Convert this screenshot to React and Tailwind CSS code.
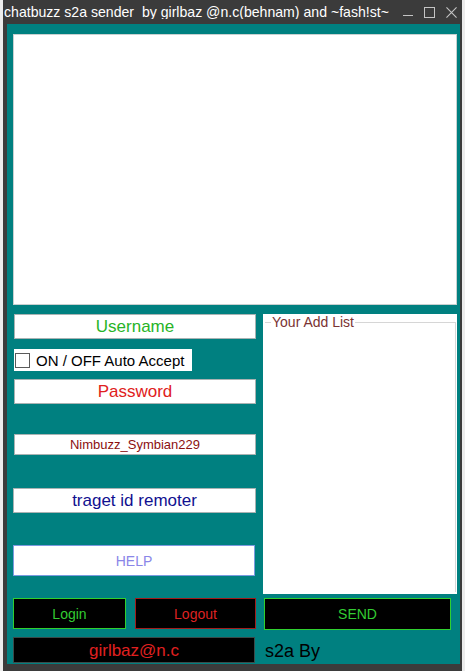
const FONT = { fontFamily: '"Liberation Sans", Arial, sans-serif' };

// plain white edit box with centred coloured text
function Field({ text, className = "" }) {
  return (
    <div className={`flex items-center justify-center bg-white border border-[#a9b3b3] leading-none ${className}`}>
      {text}
    </div>
  );
}

function BlackButton({ text, className = "" }) {
  return (
    <div className={`flex items-center justify-center bg-black border leading-none text-[14px] ${className}`}>
      {text}
    </div>
  );
}

export default function App() {
  return (
    <div className="w-[465px] h-[671px] bg-[#ececec] flex overflow-hidden" style={FONT}>
      <div className="ml-[3px] w-[459px] h-[671px] bg-[#3b3b3b] flex flex-col">
        {/* title bar */}
        <div className="h-[24px] flex items-center pl-[1px] pr-[5px]">
          <span className="min-w-0 overflow-hidden text-white text-[14.1px] whitespace-nowrap leading-none">
            chatbuzz s2a sender&nbsp; by girlbaz @n.c(behnam) and ~fash!st~
          </span>
          <div className="ml-auto shrink-0 flex items-center gap-[11px] text-[#c4c4c4]">
            <svg width="10" height="10" viewBox="0 0 10 10"><path d="M0 8.5h10" stroke="currentColor" strokeWidth="1" /></svg>
            <svg width="11" height="11" viewBox="0 0 11 11"><rect x="0.5" y="0.5" width="10" height="10" fill="none" stroke="currentColor" strokeWidth="1" /></svg>
            <svg width="11" height="11" viewBox="0 0 12 12"><path d="M0.5 0.5l11 11M11.5 0.5l-11 11" stroke="currentColor" strokeWidth="1.2" /></svg>
          </div>
        </div>

        {/* client area */}
        <div className="ml-[4px] mr-[2px] h-[640px] bg-[#008080] pl-[6px] flex flex-col">
          <div className="mt-[10px] w-[444px] h-[271px] bg-white border border-[#c8d0d0]" />

          <div className="mt-[9px] flex gap-[7px] h-[280px]">
            <div className="w-[243px] flex flex-col">
              <Field text="Username" className="ml-[1px] w-[242px] h-[25px] text-[17px] text-[#27b427]" />
              <div className="ml-[1px] mt-[10px] w-[178px] h-[22px] bg-white flex items-center">
                <span className="ml-[1px] w-[15px] h-[15px] border border-[#5a5a5a] bg-white" />
                <span className="ml-[6px] text-[15px] text-black leading-none">ON / OFF Auto Accept</span>
              </div>
              <Field text="Password" className="ml-[1px] mt-[8px] w-[242px] h-[25px] text-[17px] text-[#e02020]" />
              <Field text="Nimbuzz_Symbian229" className="ml-[1px] mt-[30px] w-[242px] h-[21px] text-[13px] text-[#8b1010]" />
              <Field text="traget id remoter" className="mt-[33px] w-[243px] h-[25px] text-[17px] text-[#101090]" />
              <div className="mt-[32px] w-[242px] h-[31px] bg-white border border-[#7a9ae0] flex items-center justify-center text-[14px] text-[#8a86e8] leading-none">
                HELP
              </div>
            </div>

            <div className="w-[194px] h-[280px] bg-white relative">
              <div className="mt-[8px] ml-[2px] mr-[1px] h-[270px] border-t border-r border-[#d6d6d6]" />
              <span className="absolute left-[8px] top-[1px] bg-white px-[1px] text-[14px] text-[#7a3333] leading-none">
                Your Add List
              </span>
            </div>
          </div>

          <div className="mt-[4px] flex items-start">
            <BlackButton text="Login" className="w-[113px] h-[31px] border-[#2fd02f] text-[#33cc33]" />
            <BlackButton text="Logout" className="ml-[9px] w-[121px] h-[31px] border-[#a01c1c] text-[#dd2222]" />
            <BlackButton text="SEND" className="ml-[8px] w-[187px] h-[32px] border-[#2fd02f] text-[#33cc33]" />
          </div>

          <div className="mt-[7px] flex items-center">
            <div className="w-[242px] h-[26px] bg-black border border-[#3a4a4a] flex items-center justify-center text-[17px] text-[#e02020] leading-none">
              girlbaz@n.c
            </div>
            <span className="ml-[10px] mt-[2px] text-[18px] text-black leading-none">s2a By</span>
          </div>
        </div>
      </div>
    </div>
  );
}
